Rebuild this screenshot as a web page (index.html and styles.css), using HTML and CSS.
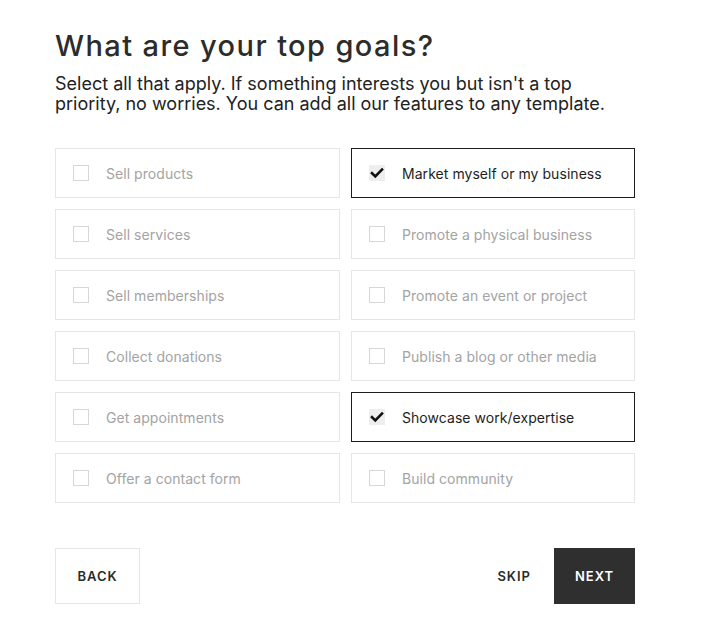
FILE: index.html
```html
<!DOCTYPE html>
<html lang="en">
<head>
<meta charset="utf-8">
<title>What are your top goals?</title>
<link rel="stylesheet" href="styles.css">
</head>
<body>
<main class="page">
  <h1 class="title">What are your top goals?</h1>
  <p class="subtitle">Select all that apply. If something interests you but isn't a top priority, no worries. You can add all our features to any template.</p>
  <div class="grid">
    <label class="option"><span class="box"></span><span class="label">Sell products</span></label>
    <label class="option selected"><span class="box"><svg viewBox="0 0 16 16" width="16" height="16"><path d="M3 8.2 L6.3 11.4 L13 4.6" fill="none" stroke="#111" stroke-width="2.6" stroke-linecap="square"/></svg></span><span class="label">Market myself or my business</span></label>
    <label class="option"><span class="box"></span><span class="label">Sell services</span></label>
    <label class="option"><span class="box"></span><span class="label">Promote a physical business</span></label>
    <label class="option"><span class="box"></span><span class="label">Sell memberships</span></label>
    <label class="option"><span class="box"></span><span class="label">Promote an event or project</span></label>
    <label class="option"><span class="box"></span><span class="label">Collect donations</span></label>
    <label class="option"><span class="box"></span><span class="label">Publish a blog or other media</span></label>
    <label class="option"><span class="box"></span><span class="label">Get appointments</span></label>
    <label class="option selected"><span class="box"><svg viewBox="0 0 16 16" width="16" height="16"><path d="M3 8.2 L6.3 11.4 L13 4.6" fill="none" stroke="#111" stroke-width="2.6" stroke-linecap="square"/></svg></span><span class="label">Showcase work/expertise</span></label>
    <label class="option"><span class="box"></span><span class="label">Offer a contact form</span></label>
    <label class="option"><span class="box"></span><span class="label">Build community</span></label>
  </div>
  <div class="actions">
    <button class="btn btn-back">Back</button>
    <div class="right">
      <button class="btn btn-skip">Skip</button>
      <button class="btn btn-next">Next</button>
    </div>
  </div>
</main>
</body>
</html>
```
FILE: styles.css
```css
* { box-sizing: border-box; }
html, body { margin: 0; background: #fff; }
body { font-family: Inter, "Noto Sans", sans-serif; color: #2b2b2b; }
.page { width: 580px; margin-left: 55px; padding-top: 26px; }
.title { margin: 0; font-size: 29px; font-weight: 500; line-height: 40px; letter-spacing: 1.4px; color: #2c2c2c; }
.subtitle { margin: 8px 0 0; font-size: 18px; line-height: 20px; letter-spacing: 0; color: #222; width: 580px; }
.grid { margin-top: 34px; display: grid; grid-template-columns: 285px 284px; column-gap: 11px; row-gap: 11px; }
.option { height: 50px; border: 1px solid #e6e6e6; display: flex; align-items: center; padding-left: 17px; cursor: pointer; }
.option.selected { border-color: #1c1c1c; }
.box { width: 16px; height: 16px; border: 1px solid #d6d6d6; flex: none; display: block; }
.selected .box { border: none; background: #eeeeee; }
.box svg { display: block; }
.label { margin-left: 17px; font-size: 14px; letter-spacing: 0.05px; color: #a3a3a3; }
.selected .label { color: #1e1e1e; }
.actions { margin-top: 45px; display: flex; justify-content: space-between; align-items: center; }
.right { display: flex; align-items: center; gap: 23px; }
.btn { font-family: Inter, "Noto Sans", sans-serif; text-transform: uppercase; font-size: 13px; font-weight: 600; letter-spacing: 1px; height: 56px; background: #fff; border: none; color: #2b2b2b; padding: 0; }
.btn-back { width: 85px; border: 1px solid #e6e6e6; }
.btn-skip { width: auto; }
.btn-next { width: 81px; background: #2f2f2f; color: #fff; }
```
